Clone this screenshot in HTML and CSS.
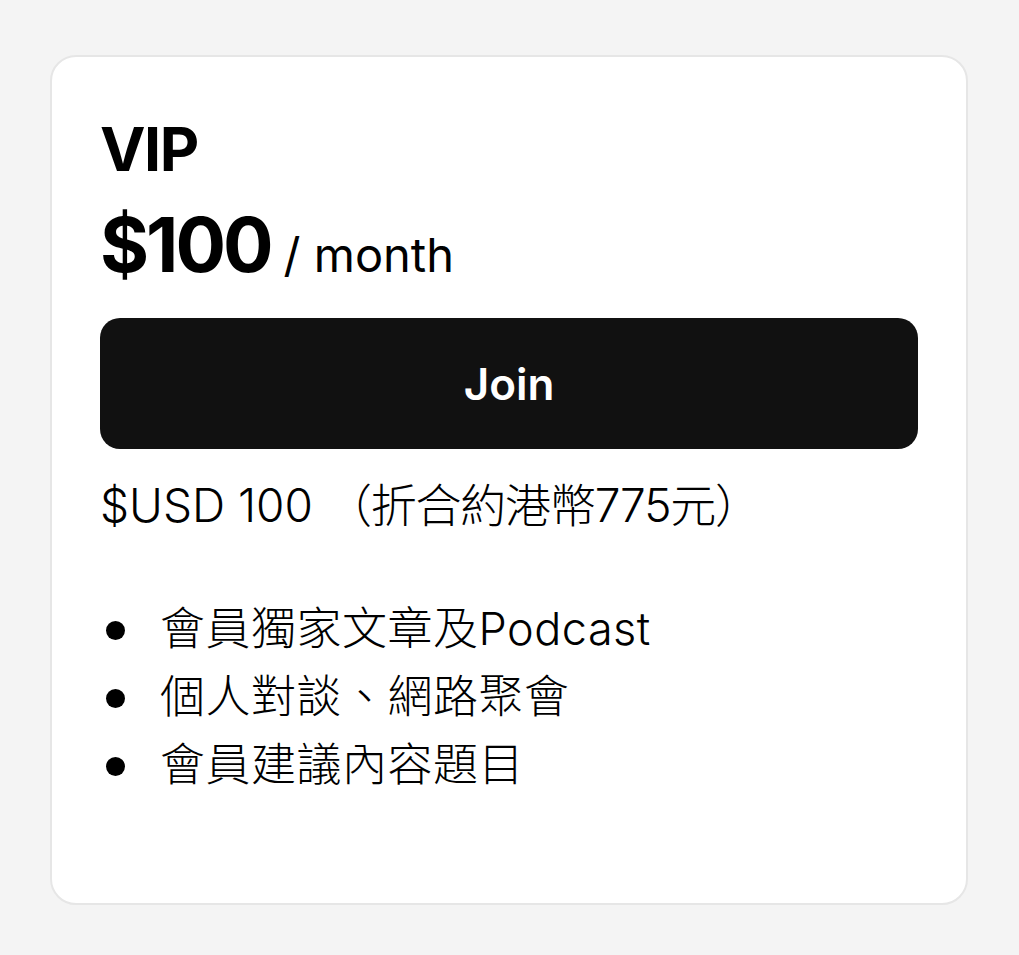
FILE: index.html
```html
<!DOCTYPE html>
<html lang="zh-Hant">
<head>
    <meta charset="UTF-8">
    <meta name="viewport" content="width=device-width, initial-scale=1.0">
    <title>VIP</title>
    <link rel="stylesheet" href="styles.css">
</head>
<body>
    <div class="card">
        <h2 class="plan-name">VIP</h2>
        <div class="price">
            <span class="amount">$100</span>
            <span class="period">/ month</span>
        </div>
        <button class="join" type="button">Join</button>
        <p class="note">$USD 100 <span class="hkd">（折合約港幣775元）</span></p>
        <ul class="perks">
            <li>會員獨家文章及Podcast</li>
            <li>個人對談、網路聚會</li>
            <li>會員建議內容題目</li>
        </ul>
    </div>
</body>
</html>
```

FILE: styles.css
```css
body {
    font-family: Inter, "Noto Sans CJK TC", sans-serif;
    background-color: #f4f4f4;
    margin: 0;
    padding: 55px 0 0 50px;
    color: #000;
}
.card {
    box-sizing: border-box;
    width: 918px;
    height: 850px;
    background-color: #fff;
    border: 2px solid #e6e6e6;
    border-radius: 26px;
    padding: 54px 48px 0 48px;
}
.plan-name {
    font-size: 61px;
    font-weight: 700;
    line-height: 76px;
    letter-spacing: -1.5px;
    margin: 0;
}
.price {
    display: flex;
    align-items: baseline;
    gap: 13px;
    margin-top: 16px;
}
.amount {
    font-size: 75px;
    font-weight: 700;
    line-height: 84px;
    letter-spacing: -3px;
}
.period {
    font-size: 47px;
    line-height: 1;
}
.join {
    display: block;
    width: 100%;
    height: 131px;
    margin-top: 31px;
    background-color: #111;
    color: #fff;
    border: none;
    border-radius: 20px;
    font-family: inherit;
    font-size: 44px;
    font-weight: 600;
    cursor: pointer;
}
.note {
    font-size: 46px;
    font-weight: 300;
    line-height: 60px;
    margin: 26px 0 0 0;
}
.hkd {
    letter-spacing: -1.2px;
}
.perks {
    list-style: none;
    margin: 60px 0 0 0;
    padding: 0;
}
.perks li {
    position: relative;
    font-size: 45px;
    font-weight: 300;
    line-height: 68px;
    letter-spacing: 0.5px;
    padding-left: 60px;
}
.perks li::before {
    content: "";
    position: absolute;
    left: 6px;
    top: 26px;
    width: 19px;
    height: 19px;
    border-radius: 50%;
    background-color: #000;
}
```
